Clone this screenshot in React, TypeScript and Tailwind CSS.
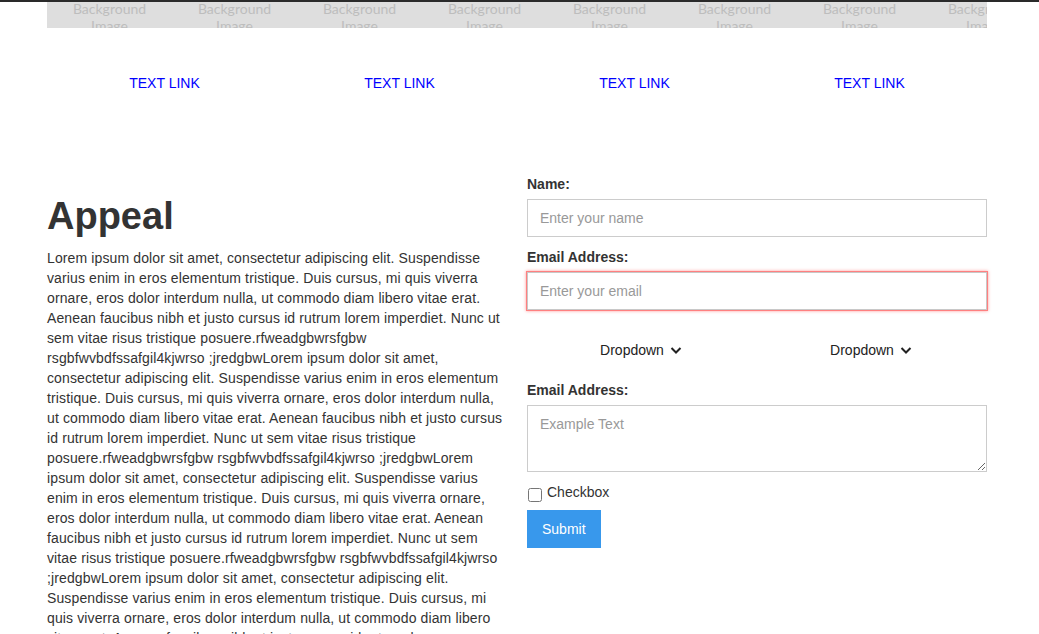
import React from "react";

const X =
  "Lorem ipsum dolor sit amet, consectetur adipiscing elit. Suspendisse varius enim in eros elementum tristique. Duis cursus, mi quis viverra ornare, eros dolor interdum nulla, ut commodo diam libero vitae erat. Aenean faucibus nibh et justo cursus id rutrum lorem imperdiet. Nunc ut sem vitae risus tristique posuere.rfweadgbwrsfgbw rsgbfwvbdfssafgil4kjwrso ;jredgbw";
const TEXT = X + X + X + X;

function Chevron() {
  return (
    <svg width="16" height="16" viewBox="0 0 16 16" className="block">
      <polyline points="3.5,6 8,10.5 12.5,6" fill="none" stroke="#222" strokeWidth="2" />
    </svg>
  );
}

function Dropdown() {
  return (
    <div className="flex-1 flex justify-center">
      <div className="relative pl-5 pr-10 py-5 text-[14px] leading-5 text-[#222]">
        Dropdown
        <span className="absolute right-5 top-1/2 -translate-y-1/2">
          <Chevron />
        </span>
      </div>
    </div>
  );
}

export default function App() {
  const tiles = Array.from({ length: 8 });
  return (
    <div
      className="relative h-[634px] w-[1039px] overflow-hidden bg-white text-[#333]"
      style={{ fontFamily: '"Liberation Sans", Arial, sans-serif' }}
    >
      <div className="absolute left-0 top-0 h-[2px] w-full bg-[#2a2a2a]" />
      <div className="ml-[47px] w-[940px]">
        <div className="flex h-[28px] overflow-hidden bg-[#dedede]">
          {tiles.map((_, i) => (
            <div
              key={i}
              className="w-[125px] shrink-0 text-center text-[14px] leading-[17px] text-[#bdbdbd]"
              style={{ fontFamily: 'Lato, "Open Sans", sans-serif' }}
            >
              Background
              <br />
              Image
            </div>
          ))}
        </div>

        <div className="mt-[45px] grid grid-cols-4 text-[14px] leading-5">
          {tiles.slice(0, 4).map((_, i) => (
            <div key={i} className="text-center">
              <a className="text-[#0000ff]">TEXT LINK</a>
            </div>
          ))}
        </div>

        <div className="mt-[81px] flex gap-5">
          <div className="w-[460px] shrink-0">
            <h1 className="mt-5 mb-[10px] text-[38px] font-bold leading-[44px] text-[#333]">Appeal</h1>
            <p className="text-[14px] leading-5 tracking-[0.12px] text-[#333]">{TEXT}</p>
          </div>

          <div className="w-[460px] shrink-0 text-[14px] leading-5">
            <label className="mb-[5px] block font-bold text-[#333]">Name:</label>
            <input
              className="mb-[10px] block h-[38px] w-full border border-[#cccccc] px-3 py-2 text-[14px] text-[#333] outline-none placeholder:text-[#999]"
              placeholder="Enter your name"
            />
            <label className="mb-[5px] block font-bold text-[#333]">Email Address:</label>
            <input
              className="mb-[10px] block h-[38px] w-full border border-[#c8c8c8] px-3 py-2 text-[14px] text-[#333] outline-none shadow-[0_0_0_1px_#ff8080,0_0_3px_1px_rgba(255,90,90,0.6)] placeholder:text-[#999]"
              placeholder="Enter your email"
            />
            <div className="flex">
              <Dropdown />
              <Dropdown />
            </div>
            <label className="mb-[5px] block font-bold text-[#333]">Email Address:</label>
            <textarea
              className="mb-[10px] block h-[67px] w-full border border-[#cccccc] px-3 py-2 text-[14px] leading-5 text-[#333] outline-none placeholder:text-[#999]"
              placeholder="Example Text"
            />
            <div className="mb-[8px] flex items-start">
              <input type="checkbox" className="mt-[6px] ml-px mr-[5px] h-[14px] w-[14px]" />
              <span className="text-[#333]">Checkbox</span>
            </div>
            <button className="bg-[#3898ec] px-[15px] py-[9px] text-[14px] leading-5 text-white">Submit</button>
          </div>
        </div>
      </div>
    </div>
  );
}
